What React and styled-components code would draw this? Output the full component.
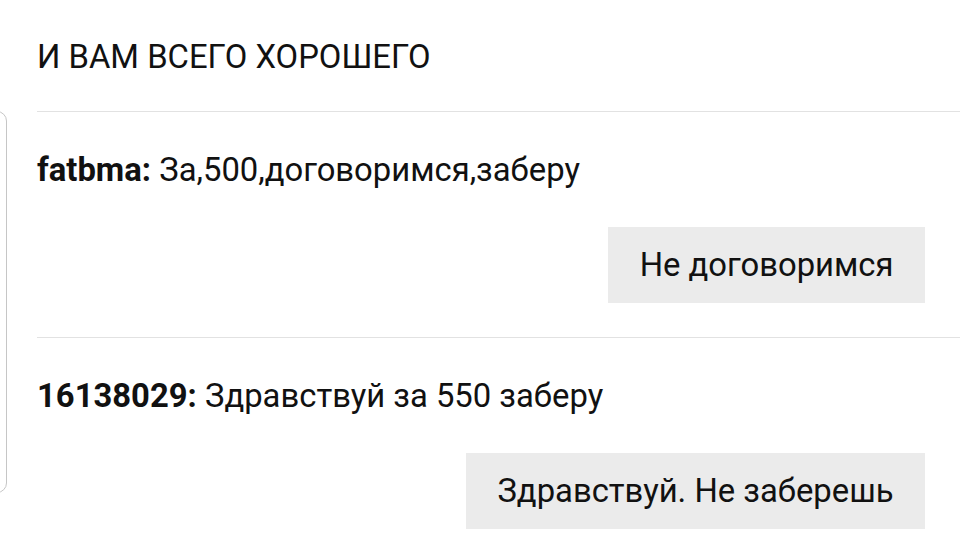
import React from 'react'
import styled, { createGlobalStyle } from 'styled-components'

const GlobalStyle = createGlobalStyle`
  html, body {
    margin: 0;
    padding: 0;
    background: #fff;
  }
  body {
    font-family: Roboto, 'Noto Sans', sans-serif;
    color: #111;
    overflow: hidden;
  }
`

const Page = styled.div`
  width: 960px;
  height: 547px;
  overflow: hidden;
`

const Title = styled.div`
  height: 111px;
  box-sizing: border-box;
  padding: 38px 0 0 37px;
  font-size: 32.8px;
  line-height: 38px;
  text-transform: uppercase;
`

const Section = styled.div`
  display: flex;
  align-items: flex-start;
`

const PeekCard = styled.div`
  flex: 0 0 20px;
  height: 382px;
  margin-left: -13px;
  box-sizing: border-box;
  border: 1.5px solid #c6c6c6;
  border-radius: 10px;
`

const Thread = styled.div`
  flex: 1;
  margin-left: 30px;
`

const Message = styled.div`
  border-top: 1px solid #e2e2e2;
  padding: 39px 35px 34px 0;
`

const Line = styled.div`
  font-size: 32.8px;
  line-height: 38px;
  white-space: nowrap;
`

const Author = styled.b`
  font-weight: 700;
`

const Actions = styled.div`
  display: flex;
  justify-content: flex-end;
  margin-top: 38px;
`

const Reply = styled.div`
  height: 76px;
  display: flex;
  align-items: center;
  padding: 0 31.5px;
  background: #ebebeb;
  font-size: 32.8px;
`

const messages = [
  { id: 1, author: 'fatbma', text: 'За,500,договоримся,заберу', reply: 'Не договоримся' },
  { id: 2, author: '16138029', text: 'Здравствуй за 550 заберу', reply: 'Здравствуй. Не заберешь' },
]

export default function App() {
  return (
    <Page>
      <GlobalStyle />
      <Title>И вам всего хорошего</Title>
      <Section>
        <PeekCard />
        <Thread>
          {messages.map((m) => (
            <Message key={m.id}>
              <Line>
                <Author>{m.author}:</Author> {m.text}
              </Line>
              <Actions>
                <Reply>{m.reply}</Reply>
              </Actions>
            </Message>
          ))}
        </Thread>
      </Section>
    </Page>
  )
}
